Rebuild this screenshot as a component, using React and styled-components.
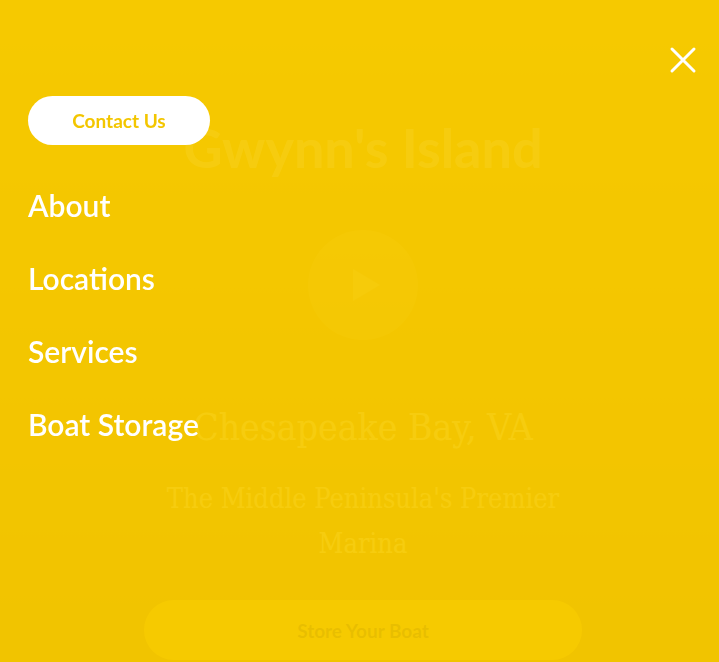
import React, { useState } from "react";
import styled, { createGlobalStyle } from "styled-components";

const GlobalStyle = createGlobalStyle`
  html, body {
    margin: 0;
    padding: 0;
    overflow: hidden;
  }
  body {
    font-family: "Lato", "Noto Sans", sans-serif;
    background: #f0c400;
  }
`;

const navLinks = ["About", "Locations", "Services", "Boat Storage"];

const App = () => {
    const [menuOpen, setMenuOpen] = useState(true);

    return (
        <>
            <GlobalStyle />
            <Hero>
                <HeroTitle>Gwynn's Island</HeroTitle>
                <PlayButton aria-label="Play video">
                    <svg width="34" height="38" viewBox="0 0 34 38">
                        <path d="M4 3 L31 19 L4 35 Z" fill="#ffffff" opacity="0.55" />
                    </svg>
                </PlayButton>
                <HeroPlace>Chesapeake Bay, VA</HeroPlace>
                <HeroTagline>The Middle Peninsula's Premier Marina</HeroTagline>
                <StoreButton>Store Your Boat</StoreButton>
            </Hero>
            {menuOpen && (
                <MenuOverlay>
                    <TopBar>
                        <CloseButton onClick={() => setMenuOpen(false)} aria-label="Close menu">
                            <svg width="28" height="28" viewBox="0 0 28 28">
                                <path d="M3 3 L25 25 M25 3 L3 25" stroke="#ffffff" strokeWidth="3" strokeLinecap="round" />
                            </svg>
                        </CloseButton>
                    </TopBar>
                    <ContactButton>Contact Us</ContactButton>
                    <NavList>
                        {navLinks.map((link) => <NavItem key={link}>{link}</NavItem>)}
                    </NavList>
                </MenuOverlay>
            )}
        </>
    );
}

export default App;

const Hero = styled.section`
  height: 662px;
  box-sizing: border-box;
  padding: 118px 0 0 7px;
  display: flex;
  flex-direction: column;
  align-items: center;
  background: linear-gradient(180deg, #f5ca00 0%, #c89000 60%, #a87000 100%);
  color: #ffffff;
`;

const HeroTitle = styled.h1`
  margin: 0;
  font-family: "Lato", sans-serif;
  font-weight: 700;
  font-size: 54px;
  line-height: 60px;
`;

const PlayButton = styled.button`
  margin-top: 52px;
  width: 110px;
  height: 110px;
  border-radius: 50%;
  border: none;
  background: rgba(255, 255, 255, 0.3);
  display: flex;
  align-items: center;
  justify-content: center;
  padding: 0 0 0 6px;
`;

const HeroPlace = styled.h2`
  margin: 66px 0 0;
  font-family: "DejaVu Serif Condensed", "DejaVu Serif", serif;
  font-stretch: condensed;
  font-weight: 400;
  font-size: 37px;
  line-height: 44px;
`;

const HeroTagline = styled.p`
  margin: 26px 0 0;
  width: 440px;
  text-align: center;
  font-family: "DejaVu Serif Condensed", "DejaVu Serif", serif;
  font-stretch: condensed;
  font-size: 27px;
  line-height: 45px;
`;

const StoreButton = styled.button`
  margin-top: 34px;
  width: 438px;
  height: 60px;
  border: none;
  border-radius: 30px;
  background: #ffd800;
  color: #1a1200;
  font-family: "Lato", sans-serif;
  font-weight: 700;
  font-size: 19px;
`;

const MenuOverlay = styled.nav`
  position: fixed;
  inset: 0;
  background: rgba(245, 201, 0, 0.94);
  padding-left: 28px;
  display: flex;
  flex-direction: column;
  align-items: flex-start;
`;

const TopBar = styled.div`
  align-self: stretch;
  height: 96px;
  box-sizing: border-box;
  padding: 46px 22px 0 0;
  display: flex;
  justify-content: flex-end;
  align-items: flex-start;
`;

const CloseButton = styled.button`
  width: 28px;
  height: 28px;
  padding: 0;
  border: none;
  background: transparent;
  cursor: pointer;
  display: flex;
`;

const ContactButton = styled.button`
  width: 182px;
  height: 49px;
  border: none;
  border-radius: 25px;
  background: #ffffff;
  color: #f3c600;
  font-family: "Lato", sans-serif;
  font-weight: 700;
  font-size: 19px;
  cursor: pointer;
`;

const NavList = styled.ul`
  list-style: none;
  margin: 24px 0 0;
  padding: 0;
`;

const NavItem = styled.li`
  font-family: "Lato", sans-serif;
  font-weight: 600;
  font-size: 30px;
  line-height: 73px;
  color: #ffffff;
`;
